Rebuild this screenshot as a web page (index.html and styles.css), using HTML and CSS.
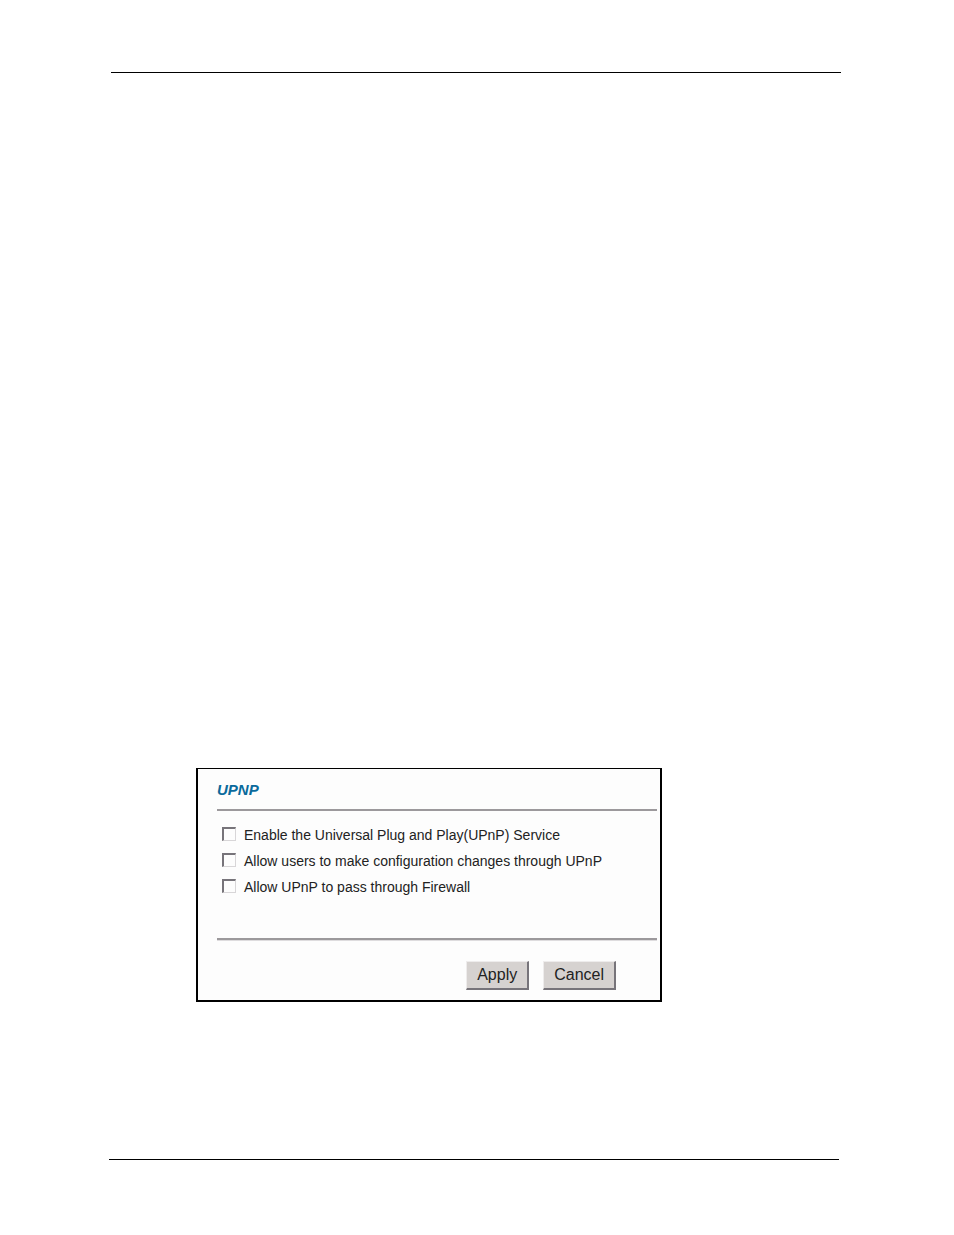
FILE: index.html
```html
<!DOCTYPE html>
<html lang="en">
<head>
    <meta charset="UTF-8">
    <meta name="viewport" content="width=device-width, initial-scale=1.0">
    <title>UPnP</title>
    <link rel="stylesheet" href="styles.css">
</head>
<body>
    <header class="page-header"></header>
    <main class="content">
        <form class="panel">
            <h1 class="panel-title">UPNP</h1>
            <div class="options">
                <div class="option">
                    <input type="checkbox" id="enableUpnp">
                    <label for="enableUpnp">Enable the Universal Plug and Play(UPnP) Service</label>
                </div>
                <div class="option">
                    <input type="checkbox" id="allowChanges">
                    <label for="allowChanges">Allow users to make configuration changes through UPnP</label>
                </div>
                <div class="option">
                    <input type="checkbox" id="passFirewall">
                    <label for="passFirewall">Allow UPnP to pass through Firewall</label>
                </div>
            </div>
            <div class="buttons">
                <button type="submit">Apply</button>
                <button type="reset">Cancel</button>
            </div>
        </form>
    </main>
    <footer class="page-footer"></footer>
</body>
</html>
```

FILE: styles.css
```css
* {
    box-sizing: border-box;
}
body {
    margin: 0;
    padding: 72px 113px 75px 109px;
    min-height: 100vh;
    display: flex;
    flex-direction: column;
    background: #fff;
    color: #222;
    font-family: "Liberation Sans", Arial, sans-serif;
    font-size: 14px;
}
.page-header {
    margin-left: 2px;
    border-top: 1px solid #000;
}
.page-footer {
    margin-right: 2px;
    border-top: 1px solid #000;
}
.content {
    flex-grow: 1;
    display: flex;
    flex-direction: column;
    justify-content: flex-end;
    padding: 40px 179px 157px 87px;
}
.panel {
    padding: 13px 3px 10px 19px;
    border: 2px solid #000;
    border-top-width: 1px;
    background: #fdfdfd;
}
.panel-title {
    margin: 0;
    padding-bottom: 11px;
    color: #0a6a9c;
    font-size: 15px;
    font-style: italic;
    font-weight: bold;
    line-height: 16px;
}
.options {
    padding: 11px 0 38px 5px;
    border-top: 2px solid #9c999c;
    border-bottom: 2px solid #9c999c;
    box-shadow: 0 1px 0 #dedcde;
}
.option {
    display: flex;
    align-items: center;
    gap: 8px;
    min-height: 26px;
}
.option input {
    appearance: none;
    flex-shrink: 0;
    width: 14px;
    height: 14px;
    margin: 0 0 2px;
    border: 2px solid #77747a;
    border-right: 1px solid #d8d6d8;
    border-bottom: 1px solid #d8d6d8;
    background: #fdfdfd;
}
.option input:checked {
    background: #555;
}
.buttons {
    display: flex;
    justify-content: flex-end;
    gap: 14px;
    padding: 21px 41px 0 0;
}
.buttons button {
    height: 29px;
    padding: 0 10px;
    border: 2px solid #77747a;
    border-top: 1px solid #eeecec;
    border-left: 1px solid #eeecec;
    background: #d6d2d0;
    color: #222;
    font-family: inherit;
    font-size: 16px;
}
```
